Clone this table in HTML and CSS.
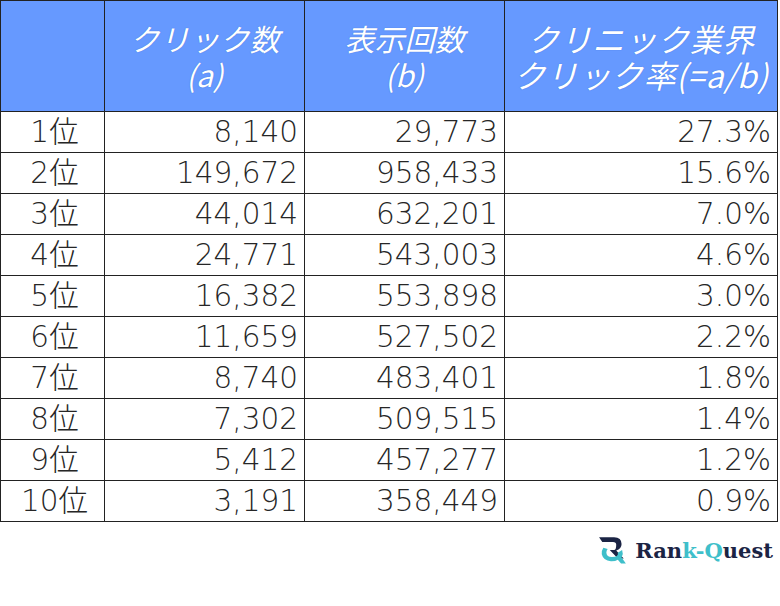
FILE: index.html
```html
<!DOCTYPE html>
<html lang="ja">
<head>
<meta charset="utf-8">
<link rel="stylesheet" href="styles.css">
</head>
<body>
<table class="ctr">
  <colgroup>
    <col class="c1"><col class="c2"><col class="c3"><col class="c4">
  </colgroup>
  <thead>
    <tr>
      <th></th>
      <th><span class="hl">クリック数</span><span class="hl">(a)</span></th>
      <th><span class="hl">表示回数</span><span class="hl">(b)</span></th>
      <th class="wide"><span class="hl">クリニック業界</span><span class="hl">クリック率(=a/b)</span></th>
    </tr>
  </thead>
  <tbody>
    <tr><td class="rank">1位</td><td>8,140</td><td>29,773</td><td>27.3%</td></tr>
    <tr><td class="rank">2位</td><td>149,672</td><td>958,433</td><td>15.6%</td></tr>
    <tr><td class="rank">3位</td><td>44,014</td><td>632,201</td><td>7.0%</td></tr>
    <tr><td class="rank">4位</td><td>24,771</td><td>543,003</td><td>4.6%</td></tr>
    <tr><td class="rank">5位</td><td>16,382</td><td>553,898</td><td>3.0%</td></tr>
    <tr><td class="rank">6位</td><td>11,659</td><td>527,502</td><td>2.2%</td></tr>
    <tr><td class="rank">7位</td><td>8,740</td><td>483,401</td><td>1.8%</td></tr>
    <tr><td class="rank">8位</td><td>7,302</td><td>509,515</td><td>1.4%</td></tr>
    <tr><td class="rank">9位</td><td>5,412</td><td>457,277</td><td>1.2%</td></tr>
    <tr><td class="rank">10位</td><td>3,191</td><td>358,449</td><td>0.9%</td></tr>
  </tbody>
</table>
<div class="brand">
  <svg class="brand-icon" viewBox="0 0 28 26" width="30" height="28" aria-hidden="true">
    <path d="M1 1 H15 Q22 1 22 7.5 Q22 12 17 13.5 L24 21 H18.5 L11 13 H15 Q17 13 17 8 Q17 5.5 14 5.5 H4 Z" fill="#1b2444"/>
    <path d="M5 11 Q3 14 3.5 17 Q5 23 12 23.5 Q16 23.7 18.5 22 L21.5 25.5 H26 L22 20 Q24 16.5 22.5 13 L18.5 15.5 Q19.5 19.5 13 19.5 Q8 19.5 7.8 15.5 Q7.8 13.5 9 12 Z" fill="#3fbfca"/>
  </svg>
  <span class="brand-text">Ran<span class="teal">k-Q</span>uest</span>
</div>
</body>
</html>
```
FILE: styles.css
```css
html, body {
  margin: 0;
  padding: 0;
  background: #ffffff;
}
body {
  font-family: "DejaVu Sans", "Noto Sans CJK JP", sans-serif;
  color: #262626;
}
.ctr {
  border-collapse: collapse;
  width: 777px;
  table-layout: fixed;
}
.c1 { width: 104px; }
.c2 { width: 200px; }
.c3 { width: 200px; }
.c4 { width: 273px; }
.ctr th, .ctr td {
  border: 1px solid #222;
  padding: 0 6px 0 0;
}
.ctr th {
  background: #6699ff;
  color: #ffffff;
  height: 110px;
  font-family: "Noto Sans CJK JP", sans-serif;
  font-weight: 400;
  font-style: italic;
  font-size: 30px;
  text-align: center;
  padding: 0;
  text-shadow: 0 0 1px #3366cc;
}
.ctr th.wide {
  font-size: 32px;
  letter-spacing: 0.5px;
}
.hl {
  display: block;
  line-height: 36px;
}
.ctr td {
  height: 40px;
  font-size: 29.5px;
  font-weight: 200;
  text-align: right;
  line-height: 40px;
}
.ctr td.rank {
  text-align: center;
  padding: 0 0 0 4px;
}
.brand {
  display: flex;
  justify-content: flex-end;
  align-items: center;
  gap: 7px;
  padding: 14px 7px 0 0;
}
.brand-icon {
  display: block;
}
.brand-text {
  font-family: "DejaVu Serif", serif;
  font-weight: 700;
  font-size: 21px;
  color: #1b2444;
}
.brand-text .teal {
  color: #3fbfca;
}
```
